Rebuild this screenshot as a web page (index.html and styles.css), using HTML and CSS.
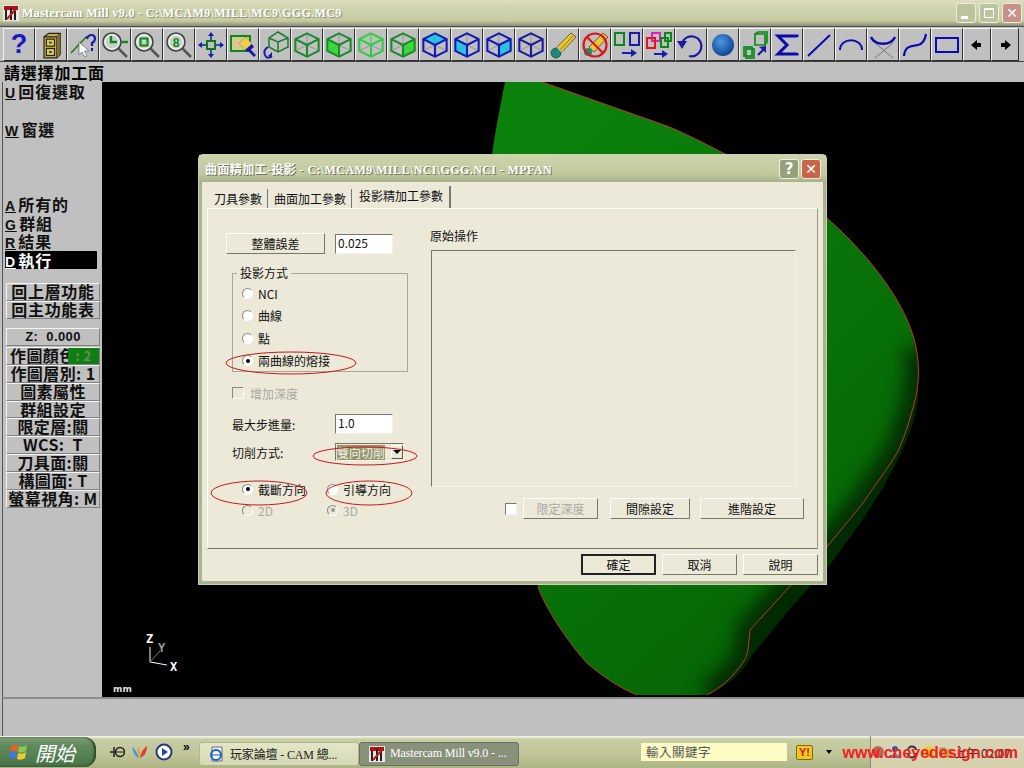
FILE: index.html
```html
<!DOCTYPE html>
<html lang="zh-Hant">
<head>
<meta charset="utf-8">
<title>Mastercam Mill v9.0</title>
<link rel="stylesheet" href="styles.css">
</head>
<body>
<svg class="defs" width="0" height="0">
  <defs>
    <symbol id="cube" viewBox="0 0 24 24">
      <path d="M12 12V2M12 12 2 17M12 12 22 17" fill="none" stroke="#8a8a8a" stroke-width=".7"/>
      <path d="M12 2 22 7V17L12 22 2 17V7ZM2 7 12 12 22 7M12 12V22" fill="none" stroke="currentColor" stroke-width="1.8"/>
    </symbol>
    <symbol id="mag" viewBox="0 0 28 28">
      <path d="M17 17 26 26" stroke="#555" stroke-width="2.5"/>
      <circle cx="11" cy="11" r="9" fill="#c8d0c8" stroke="#444" stroke-width="1.6"/>
      <circle cx="11" cy="11" r="7" fill="none" stroke="#fff" stroke-width="1"/>
    </symbol>
    <linearGradient id="body" gradientUnits="userSpaceOnUse" x1="398" y1="118" x2="758" y2="518">
      <stop offset="0" stop-color="#0b800b"/>
      <stop offset="0.7" stop-color="#076e07"/>
      <stop offset="1" stop-color="#056405"/>
    </linearGradient>
    <radialGradient id="ball" cx="0.4" cy="0.35" r="0.7">
      <stop offset="0" stop-color="#4d98e0"/>
      <stop offset="1" stop-color="#0a3f90"/>
    </radialGradient>
    <clipPath id="solid-clip">
      <path d="M403 0C398 25 393 50 390 73 400 200 425 430 436 505 445 530 470 565 485 581 495 590 515 605 535 613H605C620 605 630 595 635 588 642 580 645 575 646 568L648 548 691 501 725 465 761 421C775 400 787 385 795 371 803 355 807 340 812 322 817 305 818 285 814 265 806 225 772 178 725 136 695 110 660 90 625 73 600 60 580 50 565 44L440 0Z"/>
    </clipPath>
  </defs>
</svg>

<div class="app">
  <header class="titlebar">
    <svg class="appicon" viewBox="0 0 16 16"><rect width="16" height="16" fill="#e8e8e8"/><path d="M1 1H15V5H1Z" fill="#b01010"/><path d="M3 5V15M8 3V15M12 5V15" stroke="#222" stroke-width="2"/><path d="M4 14 13 4" stroke="#c01818" stroke-width="2"/></svg>
    <span class="title-text">Mastercam Mill v9.0 - C:\MCAM9\MILL\MC9\GGG.MC9</span>
    <div class="winbtns">
      <span class="winbtn"><i class="glyph-min"></i></span>
      <span class="winbtn"><i class="glyph-max"></i></span>
      <span class="winbtn winclose">✕</span>
    </div>
  </header>

  <nav class="toolbar">
    <button class="tool"><span class="q">?</span></button>
    <button class="tool"><svg viewBox="0 0 24 24"><path d="M6 5 10 2H20V20L17 23H6Z" fill="#c8b040" stroke="#222"/><path d="M17 5V23M17 5 20 2M6 5H17" fill="none" stroke="#222"/><path d="M17 5 20 2V20L17 23Z" fill="#807030"/><rect x="8" y="7" width="7" height="6" fill="#d8c860" stroke="#222"/><rect x="8" y="15" width="7" height="6" fill="#d8c860" stroke="#222"/><path d="M10.5 10H12.5M10.5 18H12.5" stroke="#222" stroke-width="1.5"/></svg></button>
    <button class="tool"><svg viewBox="0 0 28 28"><path d="M2 22 18 5" stroke="#207020" stroke-width="1.5"/><path d="M10 11V24L13 21 16 26 18 25 15.5 20H20Z" fill="#fff" stroke="#666" stroke-width=".7"/><path d="M18 8Q19 4 22.5 4 26 4 26 8 26 10 23 12V15" fill="none" stroke="#1a1aa8" stroke-width="2.2"/><path d="M23 17V20" stroke="#1a1aa8" stroke-width="2.2"/></svg></button>
    <button class="tool"><svg viewBox="0 0 28 28"><use href="#mag"/><path d="M10 5V11H16" fill="none" stroke="#0a8a1a" stroke-width="2.4"/><path d="M20 11H27" stroke="#0a8a1a" stroke-width="2.4"/></svg></button>
    <button class="tool"><svg viewBox="0 0 28 28"><use href="#mag"/><rect x="7.5" y="7.5" width="7" height="7" fill="none" stroke="#0a8a1a" stroke-width="2"/></svg></button>
    <button class="tool"><svg viewBox="0 0 28 28"><use href="#mag"/><text x="11" y="15.5" class="eight">8</text></svg></button>
    <button class="tool"><svg viewBox="0 0 28 28"><rect x="10" y="10" width="8" height="8" fill="#c0c0c0" stroke="#0a7a1a" stroke-width="2"/><path d="M14 1 11 5H17ZM14 27 11 23H17ZM1 14 5 11V17ZM27 14 23 11V17Z" fill="#1a1ab0"/><path d="M14 4V9M14 19V24M4 14H9M19 14H24" stroke="#1a1ab0" stroke-width="1.5"/></svg></button>
    <button class="tool"><svg viewBox="0 0 28 28"><rect x="2" y="5" width="19" height="15" fill="#d8c890" stroke="#0a8a1a" stroke-width="2"/><path d="M10 12 17 6 23 13 16 19Z" fill="#ecd24a" stroke="#888" stroke-width=".6"/><path d="M16 19 23 13 25 16 19 21Z" fill="#1a1ab0"/><path d="M20 19 26 25" stroke="#1a1ab0" stroke-width="3"/></svg></button>
    <button class="tool"><svg viewBox="0 0 28 28"><path d="M17 1 27 7V16L17 21 8 16V7ZM8 7 17 11 27 7M17 11V21" fill="none" stroke="#1c7c2c" stroke-width="1.5"/><path d="M7 16Q2 19 4 24T11 25" fill="none" stroke="#1a1ab0" stroke-width="2"/><path d="M11 21V27L7 25Z" fill="#1a1ab0"/></svg></button>
    <button class="tool cube-g"><svg viewBox="0 0 24 24"><use href="#cube"/></svg></button>
    <button class="tool cube-g"><svg viewBox="0 0 24 24"><path d="M2 7 12 12V22L2 17Z" fill="#33e033"/><use href="#cube"/></svg></button>
    <button class="tool cube-l"><svg viewBox="0 0 24 24"><path d="M2 7 12 12 22 7 12 2Z" fill="#99d899" opacity=".6"/><use href="#cube"/></svg></button>
    <button class="tool cube-g"><svg viewBox="0 0 24 24"><path d="M22 7 12 12V22L22 17Z" fill="#33e033"/><use href="#cube"/></svg></button>
    <button class="tool cube-b"><svg viewBox="0 0 24 24"><path d="M2 7 12 12 22 7 12 2Z" fill="#22c8e8"/><use href="#cube"/></svg></button>
    <button class="tool cube-b"><svg viewBox="0 0 24 24"><path d="M2 7 12 12V22L2 17Z" fill="#22c8e8"/><use href="#cube"/></svg></button>
    <button class="tool cube-b"><svg viewBox="0 0 24 24"><path d="M22 7 12 12V22L22 17Z" fill="#22c8e8"/><use href="#cube"/></svg></button>
    <button class="tool cube-n"><svg viewBox="0 0 24 24"><use href="#cube"/></svg></button>
    <button class="tool"><svg viewBox="0 0 28 28"><path d="M7 17 22 2 27 6 12 22Z" fill="#ecc82c" stroke="#333" stroke-width=".7"/><path d="M10 20 24 5" stroke="#8a6a10"/><circle cx="7" cy="22" r="5" fill="#1a8a78" stroke="#333" stroke-width=".7"/><path d="M8 16 14 22" stroke="#bbb" stroke-width="1.5"/></svg></button>
    <button class="tool"><svg viewBox="0 0 28 28"><path d="M8 16 22 2 27 6 13 21Z" fill="#ecc82c" stroke="#333" stroke-width=".7"/><circle cx="7" cy="21" r="4" fill="#1a8a78"/><circle cx="14" cy="14" r="11.5" fill="none" stroke="#d81818" stroke-width="2.2"/><path d="M6 6 22 22" stroke="#d81818" stroke-width="2.2"/></svg></button>
    <button class="tool"><svg viewBox="0 0 28 28"><rect x="2" y="2" width="9" height="12" fill="none" stroke="#0a8a1a" stroke-width="2"/><rect x="17" y="2" width="9" height="12" fill="none" stroke="#1a1ab0" stroke-width="2"/><path d="M9 22H19" stroke="#1a1ab0" stroke-width="2"/><path d="M24 22 18 18V26Z" fill="#1a1ab0"/></svg></button>
    <button class="tool"><svg viewBox="0 0 28 28"><rect x="7" y="2" width="8" height="8" fill="none" stroke="#e020c0" stroke-width="2"/><rect x="2" y="7" width="8" height="10" fill="none" stroke="#e01818" stroke-width="2"/><rect x="20" y="2" width="6" height="8" fill="none" stroke="#0a8a1a" stroke-width="2"/><rect x="16" y="7" width="7" height="9" fill="none" stroke="#0a8a1a" stroke-width="2"/><path d="M9 23H18" stroke="#1a1ab0" stroke-width="2"/><path d="M23 23 17 19V27Z" fill="#1a1ab0"/></svg></button>
    <button class="tool"><svg viewBox="0 0 28 28"><path d="M5 12A10 10 0 1 1 12 25" fill="none" stroke="#1a1aa0" stroke-width="2.2"/><path d="M0 10H10L5 18Z" fill="#1a1aa0"/></svg></button>
    <button class="tool"><svg viewBox="0 0 28 28"><circle cx="14" cy="14" r="11" fill="url(#ball)"/></svg></button>
    <button class="tool"><svg viewBox="0 0 28 28"><path d="M14 3H24V14H14ZM14 3 17 1H26V11L24 14" fill="none" stroke="#0a8a1a" stroke-width="1.7"/><rect x="3" y="16" width="8" height="9" fill="none" stroke="#0a8a1a" stroke-width="1.7"/><rect x="5" y="18" width="8" height="9" fill="none" stroke="#0a8a1a" stroke-width="1.7"/><path d="M17 24 23 18" stroke="#1a1ab0" stroke-width="2.2"/><path d="M25 15V22L18 16Z" fill="#1a1ab0"/></svg></button>
    <button class="tool"><svg viewBox="0 0 28 28"><path d="M24 6V5H5L14 14 5 23H24V22" fill="none" stroke="#0a0ab0" stroke-width="3"/></svg></button>
    <button class="tool"><svg viewBox="0 0 28 28"><path d="M3 25 25 4" stroke="#0a0ab0" stroke-width="2"/></svg></button>
    <button class="tool"><svg viewBox="0 0 28 28"><path d="M3 19C3 6 25 6 25 19" fill="none" stroke="#0a0ab0" stroke-width="2"/></svg></button>
    <button class="tool"><svg viewBox="0 0 28 28"><path d="M6 12 24 27M24 12 6 27" stroke="#777"/><path d="M2 6C6 15 22 15 26 6" fill="none" stroke="#0a0ab0" stroke-width="2.4"/></svg></button>
    <button class="tool"><svg viewBox="0 0 28 28"><path d="M3 25C4 14 12 15 17 14S24 9 25 3" fill="none" stroke="#0a0ab0" stroke-width="2.2"/></svg></button>
    <button class="tool"><svg viewBox="0 0 28 28"><rect x="3" y="7" width="22" height="14" fill="none" stroke="#0a0ab0" stroke-width="2"/></svg></button>
    <button class="tool narrow"><svg viewBox="0 0 12 12"><path d="M0 6 6 1V4H10V8H6V11Z"/></svg></button>
    <button class="tool narrow"><svg viewBox="0 0 12 12"><path d="M12 6 6 1V4H2V8H6V11Z"/></svg></button>
  </nav>

  <div class="prompt">請選擇加工面</div>

  <div class="workspace">
    <aside class="sidebar">
      <div class="menu">
        <div class="mi"><u>U</u> 回復選取</div>
        <div class="mi"></div>
        <div class="mi"><u>W</u> 窗選</div>
        <div class="mi"></div><div class="mi"></div><div class="mi"></div>
        <div class="mi"><u>A</u> 所有的</div>
        <div class="mi"><u>G</u> 群組</div>
        <div class="mi"><u>R</u> 結果</div>
        <div class="mi active"><u>D</u> 執行</div>
      </div>
      <div class="nav-btns">
        <div class="sb big">回上層功能</div>
        <div class="sb big">回主功能表</div>
      </div>
      <div class="status-btns">
        <div class="sb z">Z:&nbsp;&nbsp;0.000</div>
        <div class="sb colour">作圖顏色<i class="swatch">: 2</i></div>
        <div class="sb">作圖層別: 1</div>
        <div class="sb">圖素屬性</div>
        <div class="sb">群組設定</div>
        <div class="sb">限定層:關</div>
        <div class="sb">WCS:&nbsp;&nbsp;T</div>
        <div class="sb">刀具面:關</div>
        <div class="sb">構圖面: T</div>
        <div class="sb">螢幕視角: M</div>
      </div>
    </aside>

    <main class="canvas">
      <svg class="model" viewBox="0 0 922 615" width="922" height="615">
        <path class="rim" d="M816 300C820 340 790 392 762 436L727 484 692 522 651 572C640 592 622 606 606 613H560Z"/>
        <path class="solid" d="M403 0C398 25 393 50 390 73 400 200 425 430 436 505 445 530 470 565 485 581 495 590 515 605 535 613H605C620 605 630 595 635 588 642 580 645 575 646 568L648 548 691 501 725 465 761 421C775 400 787 385 795 371 803 355 807 340 812 322 817 305 818 285 814 265 806 225 772 178 725 136 695 110 660 90 625 73 600 60 580 50 565 44L440 0Z"/>
        <g clip-path="url(#solid-clip)">
          <path class="shade" d="M814 265C818 285 817 305 812 322 807 340 803 355 795 371 787 385 775 400 761 421L725 465 691 501 648 548 646 568C645 575 642 580 635 588 630 595 620 605 605 613"/>
        </g>
        <path class="edge" d="M440 0 565 44C580 50 600 60 625 73 660 90 695 110 725 136 772 178 806 225 814 265 818 285 817 305 812 322 807 340 803 355 795 371 787 385 775 400 761 421L725 465 691 501 648 548 646 568C645 575 642 580 635 588 630 595 620 605 605 613M535 613C515 605 495 590 485 581 470 565 445 530 436 505"/>
      </svg>
      <div class="axes">
        <span class="ax axz">Z</span><span class="ax axy">Y</span><span class="ax axx">X</span>
        <svg viewBox="0 0 30 30" width="30" height="30"><path d="M2 2V17L19 20" fill="none" stroke="#fff"/><path d="M2 17 12 6" stroke="#777"/></svg>
      </div>
      <span class="units">mm</span>
    </main>
  </div>

  <div class="statusbar"></div>

  <footer class="taskbar">
    <div class="start">
      <svg viewBox="0 0 20 20" width="20" height="20"><path d="M2 4Q6 1 9 4L8 10Q5 7 1 10Z" fill="#e8602c"/><path d="M10 4Q14 6 18 3L17 9Q13 12 9 10Z" fill="#8cc84a"/><path d="M1 11Q5 8 8 11L7 17Q4 14 0 17Z" fill="#3c7ce0"/><path d="M9 11Q13 13 17 10L16 16Q12 19 8 17Z" fill="#f4c830"/></svg>
      <span>開始</span>
    </div>
    <div class="quick">
      <svg viewBox="0 0 16 16" width="16" height="16"><path d="M1 8H5M5 3V13" stroke="#222" stroke-width="1.5"/><circle cx="11" cy="8" r="4.5" fill="none" stroke="#222" stroke-width="1.5"/><path d="M7 8H15" stroke="#222"/></svg>
      <svg viewBox="0 0 18 18" width="18" height="18"><path d="M1 4Q5 6 8 15 3 14 1 4Z" fill="#3c9ce0"/><path d="M7 3Q10 8 9 15 6 9 7 3Z" fill="#f0a020"/><path d="M16 3Q16 12 9 15 10 7 16 3Z" fill="#e04030"/></svg>
      <svg viewBox="0 0 18 18" width="18" height="18"><circle cx="9" cy="9" r="7.5" fill="#fff" stroke="#2a3c78" stroke-width="2"/><path d="M7 5V13L13 9Z" fill="#1a4ac0"/></svg>
      <span class="more">»</span>
    </div>
    <div class="task">
      <svg viewBox="0 0 16 16" width="16" height="16"><path d="M3 1H13V15H3Z" fill="#f4f4f4" stroke="#667"/><circle cx="7" cy="9" r="5" fill="none" stroke="#1c64c8" stroke-width="2"/><path d="M3 9H11" stroke="#1c64c8"/></svg>
      <span>玩家論壇 - CAM 總...</span>
    </div>
    <div class="task current">
      <svg viewBox="0 0 16 16" width="16" height="16"><rect width="16" height="16" fill="#e8e8e8"/><path d="M1 1H15V5H1Z" fill="#b01010"/><path d="M3 5V15M8 3V15M12 5V15" stroke="#222" stroke-width="2"/><path d="M4 14 13 4" stroke="#c01818" stroke-width="2"/></svg>
      <span>Mastercam Mill v9.0 - ...</span>
    </div>
    <div class="search">輸入關鍵字</div>
    <div class="yahoo">Y!</div>
    <span class="caret"></span>
    <div class="tray">
      <div class="tray-icons">
        <svg viewBox="0 0 14 14" width="14" height="14"><circle cx="7" cy="7" r="6" fill="#b06a58"/></svg>
        <svg viewBox="0 0 14 14" width="14" height="14"><circle cx="7" cy="4" r="3" fill="#3a5ca8"/><path d="M2 13Q7 4 12 13Z" fill="#6a7a98"/></svg>
        <svg viewBox="0 0 14 14" width="14" height="14"><path d="M3 6A4 4 0 0 1 11 5M11 8A4 4 0 0 1 3 9" fill="none" stroke="#333" stroke-width="2"/></svg>
        <svg viewBox="0 0 14 14" width="14" height="14"><circle cx="7" cy="7" r="6" fill="#ecc83a"/><path d="M4 9Q7 12 10 9" fill="none" stroke="#a03010"/></svg>
        <svg viewBox="0 0 14 14" width="14" height="14"><path d="M1 3H6L7 5H13V12H1Z" fill="#e0b040" stroke="#776020" stroke-width=".6"/></svg>
      </div>
      <span class="clock">上午 02:07</span>
    </div>
    <span class="watermark">www.cneyedesign.com</span>
  </footer>

  <section class="dialog">
    <div class="dlg-title">
      <span>曲面精加工-投影 - C:\MCAM9\MILL\NCI\GGG.NCI - MPFAN</span>
      <div class="dlg-btns"><span class="winbtn helpb">?</span><span class="winbtn winclose">✕</span></div>
    </div>
    <div class="tabs">
      <span class="tab">刀具參數</span>
      <span class="tab">曲面加工參數</span>
      <span class="tab on">投影精加工參數</span>
    </div>
    <div class="panel">
      <div class="col-left">
        <div class="row first">
          <button class="btn wide">整體誤差</button>
          <span class="field">0.025</span>
        </div>
        <fieldset class="group">
          <legend>投影方式</legend>
          <label class="radio"><i></i>NCI</label>
          <label class="radio"><i></i>曲線</label>
          <label class="radio"><i></i>點</label>
          <label class="radio sel"><i></i>兩曲線的熔接</label>
        </fieldset>
        <label class="check off"><i></i>增加深度</label>
        <div class="row step"><span class="lbl">最大步進量:</span><span class="field">1.0</span></div>
        <div class="row cut"><span class="lbl">切削方式:</span><span class="combo"><b>雙向切削</b><i></i></span></div>
        <div class="dirs">
          <label class="radio sel"><i></i>截斷方向</label>
          <label class="radio"><i></i>引導方向</label>
        </div>
        <div class="dirs dims">
          <label class="radio off"><i></i>2D</label>
          <label class="radio off sel"><i></i>3D</label>
        </div>
      </div>
      <div class="col-right">
        <div class="src-label">原始操作</div>
        <div class="src-box"></div>
        <div class="src-actions">
          <span class="cb"></span>
          <button class="btn dis">限定深度</button>
          <button class="btn gap">間隙設定</button>
          <button class="btn adv">進階設定</button>
        </div>
      </div>
    </div>
    <div class="dlg-foot">
      <button class="btn ok">確定</button>
      <button class="btn okb">取消</button>
      <button class="btn okb">說明</button>
    </div>
    <svg class="marks" viewBox="0 0 627 429" width="627" height="429">
      <ellipse cx="92" cy="208" rx="65" ry="11"/>
      <ellipse cx="166" cy="301" rx="52" ry="9"/>
      <ellipse cx="60" cy="338" rx="48" ry="12"/>
      <ellipse cx="170" cy="338" rx="43" ry="12"/>
    </svg>
  </section>
</div>
</body>
</html>
```

FILE: styles.css
```css
* { box-sizing: border-box; }
html, body { margin: 0; padding: 0; }
body { width: 1024px; height: 768px; overflow: hidden; font-family: "Liberation Sans", "Noto Sans CJK TC", sans-serif; background: #c0c0c0; }
.defs { position: absolute; }
.app { position: relative; width: 1024px; height: 768px; display: flex; flex-direction: column; }

.titlebar { height: 27px; flex: none; display: flex; align-items: center; padding: 0 2px 0 3px; background: linear-gradient(#dcdebf, #d2d5b0 25%, #c6cba2 80%, #8b8e78); border-bottom: 1px solid #505048; }
.appicon { width: 16px; height: 16px; flex: none; }
.title-text { margin-left: 3px; color: #fff; font: bold 12px "Liberation Serif", "Noto Sans CJK TC", serif; letter-spacing: .35px; text-shadow: 1px 1px 0 #8d9076; }
.winbtns { margin-left: auto; display: flex; gap: 3px; }
.winbtn { width: 20px; height: 20px; border: 1px solid #eef0dc; border-radius: 3px; background: #bcc49e; color: #fff; display: flex; align-items: center; justify-content: center; font: bold 14px "DejaVu Sans", sans-serif; }
.winclose { background: #c89088; }
.glyph-min { width: 7px; height: 3px; background: #fff; margin-top: 9px; margin-right: 3px; }
.glyph-max { width: 10px; height: 10px; border: 1px solid #fff; border-top-width: 2px; }

.toolbar { flex: none; height: 35px; padding: 1px 0 0 3px; display: flex; background: #c0c0c0; border-bottom: 1px solid #404040; }
.tool { width: 32px; height: 33px; flex: none; padding: 0; display: flex; align-items: center; justify-content: center; background: #c0c0c0; border: 1px solid; border-color: #f4f4f4 #303030 #303030 #f4f4f4; color: #0a7a1a; }
.tool svg { width: 28px; height: 28px; }
.tool.narrow { width: 28px; color: #000; }
.tool.narrow svg { width: 12px; height: 12px; }
.q { color: #1a1ac0; font: bold 27px "Liberation Sans", sans-serif; }
.eight { fill: #0a8a1a; font: bold 12px "Liberation Sans", sans-serif; text-anchor: middle; }
.cube-g { color: #1c8a2c; }
.cube-l { color: #36c846; }
.cube-b { color: #1418b4; }
.cube-n { color: #1c1c98; }

.prompt { flex: none; height: 20px; padding-left: 4px; font: bold 16px/20px "Noto Sans CJK TC", sans-serif; color: #000; background: #c0c0c0; letter-spacing: .8px; }

.workspace { flex: none; height: 615px; display: flex; }
.sidebar { width: 100px; margin-left: 2px; flex: none; padding: 0 2px 0 3px; background: #c0c0c0; border-left: 1px solid #555; }
.menu { margin-left: -1px; }
.mi { height: 18.8px; font: bold 16px/18.8px "Noto Sans CJK TC", sans-serif; letter-spacing: .8px; word-spacing: -2px; color: #111; white-space: nowrap; }
.mi u { font: bold 14px "Liberation Sans", sans-serif; }
.mi.active { background: #000; color: #fff; width: 92px; height: 18px; }
.nav-btns { margin-top: 14px; display: flex; flex-direction: column; }
.status-btns { margin-top: 9px; display: flex; flex-direction: column; }
.sb { height: 17.9px; position: relative; text-align: center; font: bold 16px/15px "Noto Sans CJK TC", sans-serif; letter-spacing: .4px; color: #111; background: #c0c0c0; border: 1px solid; border-color: #f4f4f4 #808080 #808080 #f4f4f4; white-space: nowrap; }
.sb.z { margin-bottom: 1px; font: bold 13px/16px "Liberation Sans", "Noto Sans CJK TC", sans-serif; }
.big { letter-spacing: .7px; }
.colour { text-align: left; padding-left: 3px; }
.swatch { position: absolute; right: 0; top: 0; bottom: 0; width: 31px; font-style: normal; text-align: center; background: #0d7f14; color: #6f8f50; font-size: 13px; }

.canvas { position: relative; flex: 1; background: #000; overflow: hidden; }
.model { position: absolute; left: 0; top: 0; }
.rim { fill: #012a01; }
.solid { fill: url(#body); }
.shade { fill: none; stroke: #000; stroke-width: 26; stroke-opacity: .6; filter: blur(9px); }
.edge { fill: none; stroke: #b8382a; stroke-width: 1; }
.axes { position: absolute; left: 46px; top: 562px; width: 30px; height: 30px; }
.axes svg { position: absolute; left: 0; top: 1px; }
.ax { position: absolute; font: bold 12px "DejaVu Sans Mono", monospace; color: #fff; }
.axz { left: -2px; top: -12px; }
.axy { left: 10px; top: -3px; color: #999; }
.axx { left: 22px; top: 16px; }
.units { position: absolute; left: 11px; top: 602px; font: bold 9px "DejaVu Sans", sans-serif; color: #ddd; }

.statusbar { flex: 1; background: #c0c0c0; border-top: 2px solid #8c8c8c; border-left: 1px solid #555; margin-left: 2px; }

.taskbar { position: relative; flex: none; height: 32px; display: flex; align-items: center; background: linear-gradient(#f0f0e0 0, #f0f0e0 1px, #c8cea4 3px, #bfc597 60%, #adb484); }
.start { width: 96px; height: 30px; flex: none; display: flex; align-items: center; gap: 6px; padding-left: 9px; border-radius: 0 12px 12px 0; background: linear-gradient(#7f9f78, #5f8a5c 30%, #4d7a4c 85%, #3f6a44); color: #fff; font: italic 20px "Noto Sans CJK TC", sans-serif; box-shadow: inset -2px 0 2px #2c4a2e; }
.quick { width: 103px; flex: none; display: flex; align-items: center; gap: 6px; padding-left: 13px; }
.more { font: bold 12px "Liberation Sans", sans-serif; margin: -10px 0 0 4px; }
.task { width: 160px; height: 24px; margin-top: 3px; flex: none; display: flex; align-items: center; gap: 5px; padding-left: 9px; border-radius: 3px; background: linear-gradient(#e4e6c6, #d6d9b4); border: 1px solid #b0b490; font: 12px "Liberation Serif", "Noto Sans CJK TC", serif; letter-spacing: -.15px; color: #222; white-space: nowrap; }
.task.current { background: #8a917a; color: #fff; border-color: #6a7060; }
.search { width: 146px; height: 18px; flex: none; margin-left: 122px; padding-left: 5px; background: #fdfbc4; color: #555; font: 12.5px/18px "Noto Sans CJK TC", sans-serif; letter-spacing: .5px; }
.yahoo { width: 17px; height: 15px; flex: none; margin-left: 9px; border: 1px solid #7a6a10; border-radius: 2px; background: #f2c820; color: #c81818; font: bold 11px/13px "Liberation Sans", sans-serif; text-align: center; }
.caret { flex: none; margin-left: 13px; border: 3px solid transparent; border-top: 4px solid #000; border-bottom: 0; }
.tray { position: absolute; right: 0; top: 0; bottom: 0; width: 154px; display: flex; align-items: center; background: linear-gradient(#f0f0e0 0, #f0f0e0 1px, #d8d4b4 3px, #d6d0ac); border-left: 1px solid #8c8c70; }
.tray-icons { display: flex; gap: 3px; flex: none; }
.clock { margin-left: auto; margin-right: 13px; font: 12px "Noto Sans CJK TC", sans-serif; color: #222; white-space: nowrap; }
.watermark { position: absolute; right: 6px; top: 8px; color: #f02020; font: bold 16px "Liberation Sans", sans-serif; white-space: nowrap; }

.dialog { position: absolute; left: 199px; top: 155px; width: 627px; height: 429px; display: flex; flex-direction: column; background: #ece9d8; border: 3px solid #a9b48f; border-top: 0; border-radius: 4px 4px 0 0; color: #111; font: 12px "Noto Sans CJK TC", sans-serif; box-shadow: 0 0 0 1px #c9d0ae; }
.dlg-title { height: 27px; flex: none; margin: 0 -3px; padding: 0 5px 0 6px; display: flex; align-items: center; justify-content: space-between; color: #fff; background: linear-gradient(#cdd3ab, #c2c89e 70%, #aab28a); font: bold 12px "Liberation Serif", "Noto Sans CJK TC", serif; letter-spacing: .4px; text-shadow: 1px 1px 0 #707458; white-space: nowrap; }
.dlg-btns { display: flex; gap: 2px; }
.dlg-btns .winbtn { text-shadow: none; letter-spacing: 0; }
.helpb { font-size: 15px; background: #96a07a; }
.dlg-btns .winclose { background: #c8634c; }
.tabs { flex: none; height: 26px; display: flex; align-items: flex-end; padding-left: 7px; }
.tab { height: 19px; padding: 0 5px; margin-right: 1px; line-height: 19px; border-right: 1px solid #777; white-space: nowrap; }
.tab.on { height: 22px; padding: 0 6px; margin: 0; line-height: 20px; border-right: 2px solid #777; }
.panel { flex: none; height: 341px; margin: 0 5px; padding: 24px 0 0 18px; display: flex; border: 1px solid; border-color: #fff #9a9a88 #77776a #fff; }
.col-left { width: 204px; flex: none; }
.row { display: flex; align-items: center; }
.row.first { gap: 10px; }
.btn { padding: 0; height: 21px; background: #ece9d8; border: 1px solid; border-color: #fff #77776a #77776a #fff; font: 12px "Noto Sans CJK TC", sans-serif; color: #111; }
.wide { width: 99px; }
.field { width: 58px; height: 20px; padding-left: 2px; line-height: 15px; background: #fff; border: 1px solid; border-color: #77776a #f4f4ec #f4f4ec #77776a; }
.group { position: relative; width: 176px; height: 105px; margin: 13px 0 0 6px; padding: 3px 0 0 9px; border: 1px solid #a8a898; }
.group legend { padding: 0 3px; margin-left: -5px; line-height: 12px; }
.radio { display: flex; align-items: center; gap: 5px; height: 22.5px; white-space: nowrap; }
.radio i { width: 11px; height: 11px; flex: none; border-radius: 50%; display: flex; align-items: center; justify-content: center; background: #fff; border: 1px solid; border-color: #8a8a80 #fff #fff #8a8a80; }
.radio.sel i::after { content: ""; width: 4px; height: 4px; border-radius: 50%; background: #000; }
.radio.off { color: #aaa8a0; }
.radio.off.sel i::after { background: #999; }
.radio.off i { background: #ece9d8; }
.check { display: flex; align-items: center; gap: 6px; margin: 11px 0 0 6px; color: #aaa8a0; height: 20px; }
.check i { width: 12px; height: 12px; border: 1px solid; border-color: #888 #fff #fff #888; }
.step { margin-top: 11px; padding-left: 6px; height: 20px; }
.lbl { width: 103px; flex: none; }
.cut { margin-top: 8px; padding-left: 6px; height: 20px; }
.combo { width: 69px; height: 18px; padding-left: 1px; display: flex; align-items: center; justify-content: space-between; border: 1px solid; border-color: #77776a #f4f4ec #f4f4ec #77776a; }
.combo b { font-weight: normal; background: #95966f; color: #f1f1e3; line-height: 15px; }
.combo i { width: 12px; height: 14px; display: flex; align-items: center; justify-content: center; background: #ece9d8; border: 1px solid; border-color: #fff #555 #555 #fff; }
.combo i::after { content: ""; border: 4px solid transparent; border-top: 4px solid #000; border-bottom: 0; }
.dirs { display: flex; margin: 17px 0 0 16px; }
.dirs .radio { width: 85px; height: 20px; }
.dirs.dims { margin-top: 1px; }
.col-right { width: 374px; flex: none; margin-top: -5px; }
.src-label { height: 22px; line-height: 16px; }
.src-box { width: 365px; height: 237px; margin-left: 1px; border: 1px solid; border-color: #77776a #f4f4ec #f4f4ec #77776a; }
.src-actions { display: flex; align-items: center; margin-top: 11px; padding-left: 75px; }
.cb { width: 12px; height: 12px; background: #fff; border: 1px solid; border-color: #77776a #f4f4ec #f4f4ec #77776a; }
.dis { width: 75px; margin-left: 6px; color: #aaa8a0; }
.gap { width: 80px; margin-left: 12px; }
.adv { width: 104px; margin-left: 10px; flex: none; }
.dlg-foot { flex: 1; display: flex; justify-content: flex-end; align-items: flex-start; gap: 6px; padding: 5px 5px 0 0; }
.ok { width: 75px; height: 21px; border: 2px solid; border-color: #222; }
.okb { width: 75px; height: 21px; }
.marks { position: absolute; left: -3px; top: 0; pointer-events: none; fill: none; stroke: #c81818; stroke-width: 1; }
```
